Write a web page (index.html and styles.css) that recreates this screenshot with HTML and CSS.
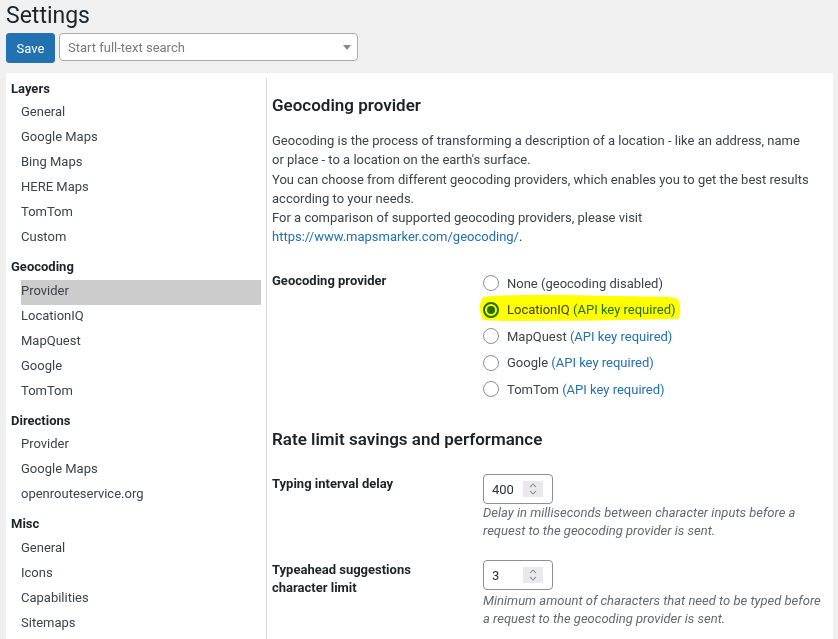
FILE: index.html
```html
<!DOCTYPE html>
<html lang="en">
<head>
<meta charset="utf-8">
<title>Settings</title>
<link rel="stylesheet" href="styles.css">
</head>
<body>
<div class="wrap">
  <h1 class="page-title">Settings</h1>
  <div class="toolbar">
    <button class="btn-primary" type="button">Save</button>
    <div class="search-select">
      <span class="placeholder">Start full-text search</span>
      <span class="select-arrow"></span>
    </div>
  </div>

  <div class="panel">
    <nav class="sidebar">
      <div class="nav-heading">Layers</div>
      <a class="nav-item">General</a>
      <a class="nav-item">Google Maps</a>
      <a class="nav-item">Bing Maps</a>
      <a class="nav-item">HERE Maps</a>
      <a class="nav-item">TomTom</a>
      <a class="nav-item">Custom</a>
      <div class="nav-heading">Geocoding</div>
      <a class="nav-item is-active">Provider</a>
      <a class="nav-item">LocationIQ</a>
      <a class="nav-item">MapQuest</a>
      <a class="nav-item">Google</a>
      <a class="nav-item">TomTom</a>
      <div class="nav-heading">Directions</div>
      <a class="nav-item">Provider</a>
      <a class="nav-item">Google Maps</a>
      <a class="nav-item">openrouteservice.org</a>
      <div class="nav-heading">Misc</div>
      <a class="nav-item">General</a>
      <a class="nav-item">Icons</a>
      <a class="nav-item">Capabilities</a>
      <a class="nav-item">Sitemaps</a>
    </nav>

    <main class="content">
      <h2 class="section-title">Geocoding provider</h2>
      <p class="intro">Geocoding is the process of transforming a description of a location - like an address, name<br>or place - to a location on the earth's surface.<br>You can choose from different geocoding providers, which enables you to get the best results according to your needs.<br>For a comparison of supported geocoding providers, please visit <a class="link">https://www.mapsmarker.com/geocoding/</a>.</p>

      <div class="form-row form-row-first">
        <div class="form-label">Geocoding provider</div>
        <div class="form-field">
          <ul class="radio-list">
            <li class="radio-option"><span class="radio"></span>None (geocoding disabled)</li>
            <li class="radio-option is-marked"><span class="radio is-checked"></span>LocationIQ&nbsp;<span class="link">(API key required)</span>
              <svg class="marker" width="204" height="29" viewBox="0 0 204 29" aria-hidden="true"><path d="M5 4 C 30 1, 90 2, 140 3 S 192 3, 200 6 C 203 12, 203 20, 200 26 C 150 27, 90 28, 40 28 S 9 27, 4 25 C 1 18, 1 9, 5 4 Z" fill="#ffff00"/></svg>
            </li>
            <li class="radio-option"><span class="radio"></span>MapQuest&nbsp;<span class="link">(API key required)</span></li>
            <li class="radio-option"><span class="radio"></span>Google&nbsp;<span class="link">(API key required)</span></li>
            <li class="radio-option"><span class="radio"></span>TomTom&nbsp;<span class="link">(API key required)</span></li>
          </ul>
        </div>
      </div>

      <h2 class="section-title section-title-spaced">Rate limit savings and performance</h2>

      <div class="form-row form-row-input">
        <div class="form-label">Typing interval delay</div>
        <div class="form-field">
          <div class="num-input"><span class="num-value">400</span><span class="spinner"><svg width="10" height="14" viewBox="0 0 10 14"><path d="M2 5 L5 2 L8 5 M2 9 L5 12 L8 9" fill="none" stroke="#9a9aa6" stroke-width="1.1"/></svg></span></div>
          <p class="description">Delay in milliseconds between character inputs before a<br>request to the geocoding provider is sent.</p>
        </div>
      </div>

      <div class="form-row form-row-input form-row-next">
        <div class="form-label">Typeahead suggestions<br>character limit</div>
        <div class="form-field">
          <div class="num-input"><span class="num-value">3</span><span class="spinner"><svg width="10" height="14" viewBox="0 0 10 14"><path d="M2 5 L5 2 L8 5 M2 9 L5 12 L8 9" fill="none" stroke="#9a9aa6" stroke-width="1.1"/></svg></span></div>
          <p class="description description-next">Minimum amount of characters that need to be typed before<br>a request to the geocoding provider is sent.</p>
        </div>
      </div>
    </main>
  </div>
</div>
</body>
</html>
```

FILE: styles.css
```css
* {
  box-sizing: border-box;
}

html,
body {
  margin: 0;
}

body {
  background: #f0f0f1;
  font-family: Roboto, "Noto Sans", sans-serif;
  font-size: 13px;
  color: #3c434a;
}

.wrap {
  padding: 0 5px 0 6px;
}

.page-title {
  margin: 0;
  font-size: 23px;
  font-weight: 400;
  line-height: 31px;
  color: #1d2327;
}

.toolbar {
  display: flex;
  align-items: flex-start;
  gap: 4px;
  margin-top: 2px;
}

.btn-primary {
  width: 49px;
  height: 30px;
  padding: 0;
  background: #2271b1;
  color: #fff;
  border: 1px solid #2271b1;
  border-radius: 3px;
  font-family: inherit;
  font-size: 13px;
}

.search-select {
  width: 299px;
  height: 28px;
  display: flex;
  align-items: center;
  padding: 0 6px 0 8px;
  background: #fff;
  border: 1px solid #aaaaaa;
  border-radius: 4px;
}

.placeholder {
  flex: 1;
  color: #7a7a7a;
}

.select-arrow {
  width: 0;
  height: 0;
  border-left: 4px solid transparent;
  border-right: 4px solid transparent;
  border-top: 5px solid #888;
}

.panel {
  margin-top: 10px;
  width: 827px;
  min-height: 600px;
  background: #fff;
  display: grid;
  grid-template-columns: 261px 1fr;
}

/* sidebar */
.sidebar {
  margin-top: 5px;
  border-right: 1px solid #dcdcde;
  display: flex;
  flex-direction: column;
}

.nav-heading {
  padding: 6px 0 2.4px 5px;
  line-height: 20px;
  font-weight: 700;
  color: #1d2327;
}

.nav-heading:first-child {
  padding-top: 1px;
}

.nav-item {
  display: block;
  margin: 0 5px 0 15px;
  padding: 1px 0 4px;
  line-height: 20px;
  color: #3c434a;
}

.nav-item.is-active {
  background: #cccccc;
}

/* content */
.content {
  padding: 0 5px 0 5px;
}

.section-title {
  margin: 20px 0 0;
  font-size: 17px;
  line-height: 24px;
  font-weight: 600;
  color: #1d2327;
}

.section-title-spaced {
  margin-top: 25px;
}

.intro {
  margin: 14px 0 0;
  line-height: 19.3px;
}

.link {
  color: #2271b1;
  text-decoration: none;
}

.form-row {
  display: grid;
  grid-template-columns: 211px 1fr;
}

.form-row-first {
  margin-top: 21px;
}

.form-row-input {
  margin-top: 23px;
}

.form-row-next {
  margin-top: 20px;
}

.form-label {
  padding-top: 1px;
  line-height: 18px;
  font-weight: 700;
  color: #1d2327;
}

.form-row-first .form-label {
  padding-top: 4px;
}

.radio-list {
  margin: 0;
  padding: 2px 0 0;
  list-style: none;
}

.radio-option {
  height: 26.5px;
  display: flex;
  align-items: center;
}

.radio-option.is-marked {
  position: relative;
}

.radio {
  position: relative;
  flex: none;
  width: 16px;
  height: 16px;
  margin-right: 8px;
  border: 1px solid #8c8f94;
  border-radius: 50%;
  background: #fff;
}

.radio.is-checked {
  border: 2px solid #2271b1;
}

.radio.is-checked::after {
  content: "";
  position: absolute;
  left: 2px;
  top: 2px;
  width: 8px;
  height: 8px;
  border-radius: 50%;
  background: #2271b1;
}

.marker {
  position: absolute;
  left: -5px;
  top: -3px;
  mix-blend-mode: multiply;
  pointer-events: none;
}

.num-input {
  width: 70px;
  height: 30px;
  display: flex;
  align-items: center;
  padding: 0 9px 0 8px;
  background: #fff;
  border: 1px solid #8c8f94;
  border-radius: 4px;
  color: #2c3338;
}

.num-value {
  flex: 1;
}

.spinner {
  width: 20px;
  height: 16px;
  display: flex;
  align-items: center;
  justify-content: center;
  background: #e9e9ed;
}

.description {
  margin: 0;
  line-height: 18px;
  font-style: italic;
  color: #646970;
}

.description-next {
  margin-top: 2px;
}
```
